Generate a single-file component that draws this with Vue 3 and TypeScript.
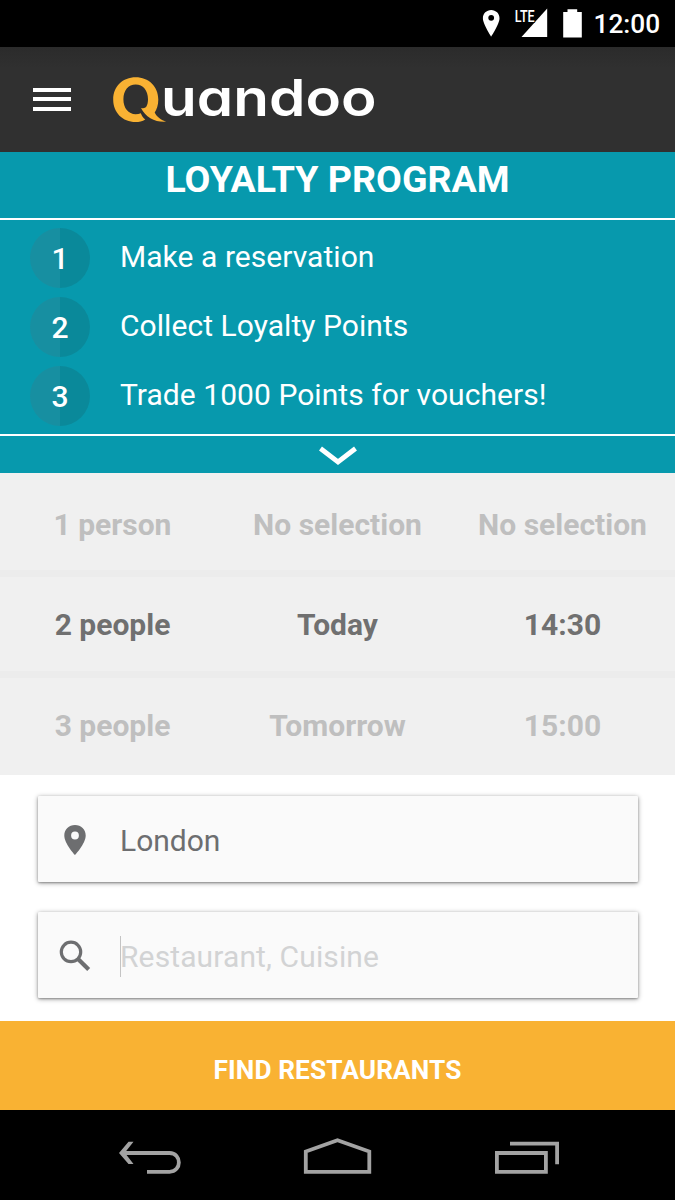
<script setup lang="ts">
interface Step {
  num: number
  text: string
}

interface PickerRow {
  cells: string[]
  active: boolean
}

const steps: Step[] = [
  { num: 1, text: 'Make a reservation' },
  { num: 2, text: 'Collect Loyalty Points' },
  { num: 3, text: 'Trade 1000 Points for vouchers!' },
]

const rows: PickerRow[] = [
  { cells: ['1 person', 'No selection', 'No selection'], active: false },
  { cells: ['2 people', 'Today', '14:30'], active: true },
  { cells: ['3 people', 'Tomorrow', '15:00'], active: false },
]
</script>

<template>
  <div class="phone">
    <div class="status">
      <svg class="status-icons" width="110" height="47" viewBox="0 0 110 47">
        <path fill="#fff" fill-rule="evenodd" d="M11.2 10C6.500 10 2.900 13.600 2.900 18.200C2.900 24 11.200 36.500 11.200 36.500S19.500 24 19.500 18.200C19.500 13.600 15.900 10 11.200 10ZM11.200 14.900a2.900 2.900 0 1 1 0 5.800a2.900 2.900 0 1 1 0-5.800Z" />
        <path fill="#fff" d="M67.200 8.500V37H41.500Z" />
        <text x="34.700" y="21.600" class="lte" textLength="20" lengthAdjust="spacingAndGlyphs" stroke="#000" stroke-width="1.600" paint-order="stroke">LTE</text>
        <path fill="#fff" d="M83.200 12H87.500V9.200H97.200V12H101.800V37.500H83.200Z" />
      </svg>
      <span class="clock">12:00</span>
    </div>

    <header class="appbar">
      <div class="burger"><i></i><i></i><i></i></div>
      <svg class="logo" width="280" height="90" viewBox="110 55 280 90">
        <path fill="#f9b233" fill-rule="evenodd" d="M135.700 77.300C148.600 77.300 158.300 86.600 158.300 99.500C158.300 105.400 156.700 109.500 154.700 112.500C156.500 116.500 161 120.300 166.500 121.600C156 122.600 145.500 117.500 141 107.900C143.500 108.400 145.200 108.100 146.100 107.100C147.500 104.800 148 102 148 99.200C148 90.500 143 84.600 135.700 84.600C128.300 84.600 123.400 90.500 123.400 99.300C123.400 108.200 128.400 114.200 135.700 114.200C137.500 114.200 139.300 113.900 140.800 113.200C141.700 115.800 143.200 118 145.300 119.400C142.400 121.200 139 122 135.700 122C122.500 122 113.200 112.500 113.200 99.500C113.200 86.600 122.700 77.300 135.700 77.300Z" />
        <text x="161" y="115.700" class="word" textLength="215.500" lengthAdjust="spacingAndGlyphs">uandoo</text>
      </svg>
    </header>

    <section class="loyalty">
      <h1>LOYALTY PROGRAM</h1>
      <ul>
        <li v-for="s in steps" :key="s.num">
          <span class="num">{{ s.num }}</span>
          <span>{{ s.text }}</span>
        </li>
      </ul>
      <div class="collapse">
        <svg width="40" height="22" viewBox="0 0 40 22">
          <path d="M2.500 3.500L20 17L37.500 3.500" fill="none" stroke="#fff" stroke-width="4.800" />
        </svg>
      </div>
    </section>

    <section class="picker">
      <div v-for="(r, i) in rows" :key="i" class="prow" :class="{ active: r.active }">
        <span v-for="(c, j) in r.cells" :key="j">{{ c }}</span>
      </div>
    </section>

    <section class="search">
      <div class="field">
        <svg width="36" height="36" viewBox="0 0 36 36">
          <path fill="#6d6e70" fill-rule="evenodd" d="M18 3C11.900 3 7.300 7.600 7.300 13.500C7.300 21.500 18 33 18 33S28.700 21.500 28.700 13.500C28.700 7.600 24.100 3 18 3ZM18 9.600a3.900 3.900 0 1 1 0 7.800a3.900 3.900 0 1 1 0-7.800Z" />
        </svg>
        <span class="value">London</span>
      </div>
      <div class="field">
        <svg width="36" height="36" viewBox="0 0 36 36" fill="none" stroke="#6d6e70">
          <circle cx="14" cy="13.900" r="9.700" stroke-width="3.200" />
          <path d="M21.300 21.200L31.700 31.500" stroke-width="4.200" />
        </svg>
        <span class="value hint"><i class="caret"></i>Restaurant, Cuisine</span>
      </div>
    </section>

    <button class="find">FIND RESTAURANTS</button>

    <nav class="navbar">
      <svg width="675" height="90" viewBox="0 6.200 675 90" fill="none" stroke="#a3a3a3" stroke-width="3.800">
        <path d="M123 49.200H169.500C182 49.200 182 68 169.500 68H147" />
        <path fill="#a3a3a3" stroke="none" d="M119 49.200L128.500 38H133.500L124.800 49L133.500 60.300H128.500Z" />
        <path d="M305.800 68V47.700L337.500 36.500L369.300 47.700V68Z" />
        <path d="M496.900 49.200H545.900V68H496.900Z" />
        <path d="M510 39.800H557.100V60.500" />
      </svg>
    </nav>
  </div>
</template>

<style>
body {
  margin: 0;
  background: #fff;
}
</style>

<style scoped>
.phone {
  width: 675px;
  height: 1200px;
  overflow: hidden;
  display: flex;
  flex-direction: column;
  background: #fff;
  font-family: Roboto, 'Liberation Sans', sans-serif;
  font-size: 30px;
}
.phone > * {
  flex: none;
  box-sizing: border-box;
}
.status {
  height: 47px;
  background: #000;
  color: #fff;
  display: flex;
  justify-content: flex-end;
  padding-right: 15px;
}
.status-icons {
  margin-right: 3.500px;
}
.clock {
  width: 66.500px;
  font-size: 26.250px;
  font-weight: 500;
  line-height: 49px;
  height: 47px;
  white-space: nowrap;
}
.lte {
  font: 500 16.800px Roboto, sans-serif;
  fill: #fff;
}
.appbar {
  height: 105px;
  background: linear-gradient(#2b2b2b, #303030 20%);
  display: flex;
  align-items: flex-start;
}
.burger {
  width: 38px;
  margin: 41px 0 0 33.300px;
  display: flex;
  flex-direction: column;
  gap: 5.400px;
}
.burger i {
  height: 4px;
  background: #fff;
}
.logo {
  margin: 8px 0 0 38.700px;
}
.word {
  font: 600 50.500px Inter, sans-serif;
  font-feature-settings: 'cv11' 1;
  fill: #fff;
}
.loyalty {
  height: 321px;
  background: #0799ad;
  color: #fff;
}
h1 {
  margin: 0;
  height: 66px;
  line-height: 55px;
  font-size: 37.500px;
  font-weight: 700;
  text-align: center;
}
ul {
  list-style: none;
  margin: 0;
  padding: 7.500px 30px 0;
  height: 217.700px;
  box-sizing: border-box;
  border-top: 2px solid #fff;
  border-bottom: 2px solid #fff;
}
li {
  display: flex;
  align-items: center;
  gap: 30px;
  height: 60px;
  margin-bottom: 9.300px;
  line-height: 58px;
  letter-spacing: 0.050px;
}
li span {
  height: 60px;
}
.num {
  width: 60px;
  height: 60px;
  line-height: 61px;
  border-radius: 50%;
  text-align: center;
  font-weight: 500;
  background: linear-gradient(90deg, #178fa1 50%, #0a899a 50%);
}
.collapse {
  display: flex;
  justify-content: center;
  padding-top: 9.500px;
}
.picker {
  height: 302px;
  background: #f0f0f0;
}
.prow {
  display: grid;
  grid-template-columns: repeat(3, 225px);
  height: 101px;
  box-sizing: border-box;
  border-bottom: 7px solid #ececec;
  line-height: 95px;
  text-align: center;
  font-weight: 700;
  color: #bfbfbf;
}
.prow:first-child {
  height: 104px;
  line-height: 103px;
}
.prow:last-child {
  height: 97px;
  line-height: 95px;
  border: 0;
}
.prow.active {
  color: #707070;
}
.search {
  height: 246px;
  padding: 20.500px 37.500px 0;
  display: flex;
  flex-direction: column;
  gap: 29.500px;
}
.field {
  height: 86.500px;
  display: flex;
  align-items: center;
  box-sizing: border-box;
  padding: 1.500px 0 0 19.500px;
  background: #fafafa;
  border-radius: 1px;
  box-shadow: 0 1px 5px rgba(0, 0, 0, 0.4), 0 1px 2px rgba(0, 0, 0, 0.25);
}
.value {
  margin-left: 27px;
  padding-top: 1.500px;
  color: #6d6e70;
  display: flex;
  align-items: center;
}
.hint {
  color: #d2d3d4;
  letter-spacing: 0.120px;
}
.caret {
  width: 1px;
  height: 41px;
  margin-right: -1px;
  background: #c4c4c4;
}
.find {
  height: 89px;
  border: 0;
  padding: 9px 0 0;
  background: #f9b233;
  color: #fff;
  font: 700 26.250px Roboto, sans-serif;
  letter-spacing: 0.100px;
}
.navbar {
  height: 90px;
  background: #000;
}
</style>
